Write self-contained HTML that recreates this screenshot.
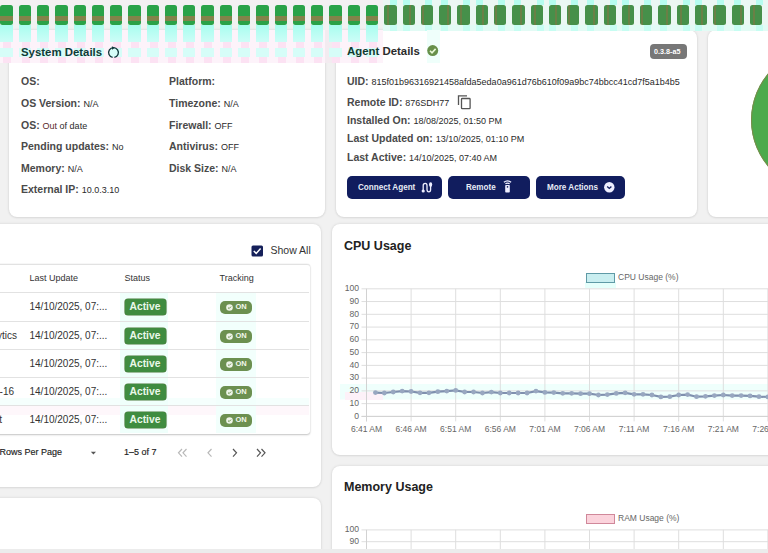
<!DOCTYPE html>
<html><head><meta charset="utf-8">
<style>
*{box-sizing:border-box;margin:0;padding:0}
html,body{width:768px;height:553px;overflow:hidden;background:#f1f1f1;font-family:"Liberation Sans",sans-serif;color:#333}
.abs{position:absolute}
.card{position:absolute;background:#fff;border-radius:8px;box-shadow:0 0 3px rgba(0,0,0,.13),0 1px 2px rgba(0,0,0,.05)}
.t{position:absolute;white-space:nowrap;line-height:1}
.title{font-weight:700;font-size:11.4px;color:#2b2b2b}
.lbl{font-weight:700;font-size:10.5px;color:#4a4a4a}
.val{font-weight:400;font-size:9px;color:#2a2a2a}
.btn{position:absolute;background:#111d5e;border-radius:5px;color:#e8ecf6;font-weight:700;font-size:9px}
.btn>span{transform:scaleX(0.9);transform-origin:0 0}
.act{position:absolute;background:#3f8c40;border-radius:3px;color:#eaf8ea;font-weight:700;font-size:10.3px;width:41px;height:16px;box-shadow:0 0 0 0.6px #4c7a3c}
.on{position:absolute;background:#6c9050;border-radius:5px;width:32px;height:13px}
.rowline{position:absolute;left:0;width:309px;height:1px;background:#e2e2e2}
.cell{position:absolute;white-space:nowrap;line-height:1;font-size:10px;color:#333}
</style></head><body>

<!-- top row cards -->
<div class="card" style="left:9px;top:30px;width:316px;height:187px"></div>
<div class="card" style="left:336px;top:30px;width:361px;height:187px"></div>
<div class="card" style="left:708px;top:30px;width:80px;height:187px;overflow:hidden">
  <div class="abs" style="left:43px;top:18px;width:144px;height:144px;border-radius:50%;background:#4caa4c;box-shadow:0 0 0 1px #7a8a4a inset"></div>
</div>

<!-- second row -->
<div class="card" style="left:-20px;top:224px;width:341px;height:263px"></div>
<div class="card" style="left:332px;top:224px;width:460px;height:231px"></div>
<div class="card" style="left:-20px;top:498px;width:341px;height:80px"></div>
<div class="card" style="left:332px;top:466px;width:460px;height:120px"></div>

<div class="abs" style="left:0;top:0;width:383px;height:5px;background:#f4f0f2"></div>
<div class="abs" style="left:0;top:30px;width:383px;height:33px;background:#fdf3fa"></div>
<div class="abs" style="left:325px;top:30px;width:11px;height:33px;background:#f3ebf0"></div>
<div class="abs" style="left:383px;top:0;width:385px;height:30px;background:#ebf7f3"></div>
<div class="abs" style="left:383px;top:25px;width:385px;height:6px;background:#e2fbf5"></div>
<div class="abs" style="left:0.40px;top:25px;width:12.3px;height:16.5px;background:linear-gradient(#a8fdef,#cdfdf7)"></div>
<div class="abs" style="left:3.40px;top:42px;width:8px;height:6px;background:#fce2f3"></div>
<div class="abs" style="left:0.40px;top:48px;width:12.3px;height:9px;background:#d6fdf8"></div>
<div class="abs" style="left:3.40px;top:57px;width:8px;height:6px;background:#fce2f3"></div>
<div class="abs" style="left:0.40px;top:5px;width:12.3px;height:19.8px;border-radius:2.5px;background:linear-gradient(#2aa248 0,#2aa248 11px,#82834a 11px,#82834a 16px,#2aa248 16px)"></div>
<div class="abs" style="left:18.68px;top:25px;width:12.3px;height:16.5px;background:linear-gradient(#a8fdef,#cdfdf7)"></div>
<div class="abs" style="left:21.68px;top:42px;width:8px;height:6px;background:#fce2f3"></div>
<div class="abs" style="left:18.68px;top:48px;width:12.3px;height:9px;background:#d6fdf8"></div>
<div class="abs" style="left:21.68px;top:57px;width:8px;height:6px;background:#fce2f3"></div>
<div class="abs" style="left:18.68px;top:5px;width:12.3px;height:19.8px;border-radius:2.5px;background:linear-gradient(#2aa248 0,#2aa248 11px,#82834a 11px,#82834a 16px,#2aa248 16px)"></div>
<div class="abs" style="left:36.96px;top:25px;width:12.3px;height:16.5px;background:linear-gradient(#a8fdef,#cdfdf7)"></div>
<div class="abs" style="left:39.96px;top:42px;width:8px;height:6px;background:#fce2f3"></div>
<div class="abs" style="left:36.96px;top:48px;width:12.3px;height:9px;background:#d6fdf8"></div>
<div class="abs" style="left:39.96px;top:57px;width:8px;height:6px;background:#fce2f3"></div>
<div class="abs" style="left:36.96px;top:5px;width:12.3px;height:19.8px;border-radius:2.5px;background:linear-gradient(#2aa248 0,#2aa248 11px,#82834a 11px,#82834a 16px,#2aa248 16px)"></div>
<div class="abs" style="left:55.24px;top:25px;width:12.3px;height:16.5px;background:linear-gradient(#a8fdef,#cdfdf7)"></div>
<div class="abs" style="left:58.24px;top:42px;width:8px;height:6px;background:#fce2f3"></div>
<div class="abs" style="left:55.24px;top:48px;width:12.3px;height:9px;background:#d6fdf8"></div>
<div class="abs" style="left:58.24px;top:57px;width:8px;height:6px;background:#fce2f3"></div>
<div class="abs" style="left:55.24px;top:5px;width:12.3px;height:19.8px;border-radius:2.5px;background:linear-gradient(#2aa248 0,#2aa248 11px,#82834a 11px,#82834a 16px,#2aa248 16px)"></div>
<div class="abs" style="left:73.52px;top:25px;width:12.3px;height:16.5px;background:linear-gradient(#a8fdef,#cdfdf7)"></div>
<div class="abs" style="left:76.52px;top:42px;width:8px;height:6px;background:#fce2f3"></div>
<div class="abs" style="left:73.52px;top:48px;width:12.3px;height:9px;background:#d6fdf8"></div>
<div class="abs" style="left:76.52px;top:57px;width:8px;height:6px;background:#fce2f3"></div>
<div class="abs" style="left:73.52px;top:5px;width:12.3px;height:19.8px;border-radius:2.5px;background:linear-gradient(#2aa248 0,#2aa248 11px,#82834a 11px,#82834a 16px,#2aa248 16px)"></div>
<div class="abs" style="left:91.80px;top:25px;width:12.3px;height:16.5px;background:linear-gradient(#a8fdef,#cdfdf7)"></div>
<div class="abs" style="left:94.80px;top:42px;width:8px;height:6px;background:#fce2f3"></div>
<div class="abs" style="left:91.80px;top:48px;width:12.3px;height:9px;background:#d6fdf8"></div>
<div class="abs" style="left:94.80px;top:57px;width:8px;height:6px;background:#fce2f3"></div>
<div class="abs" style="left:91.80px;top:5px;width:12.3px;height:19.8px;border-radius:2.5px;background:linear-gradient(#2aa248 0,#2aa248 11px,#82834a 11px,#82834a 16px,#2aa248 16px)"></div>
<div class="abs" style="left:110.08px;top:25px;width:12.3px;height:16.5px;background:linear-gradient(#a8fdef,#cdfdf7)"></div>
<div class="abs" style="left:113.08px;top:42px;width:8px;height:6px;background:#fce2f3"></div>
<div class="abs" style="left:110.08px;top:48px;width:12.3px;height:9px;background:#d6fdf8"></div>
<div class="abs" style="left:113.08px;top:57px;width:8px;height:6px;background:#fce2f3"></div>
<div class="abs" style="left:110.08px;top:5px;width:12.3px;height:19.8px;border-radius:2.5px;background:linear-gradient(#2aa248 0,#2aa248 11px,#82834a 11px,#82834a 16px,#2aa248 16px)"></div>
<div class="abs" style="left:128.36px;top:25px;width:12.3px;height:16.5px;background:linear-gradient(#a8fdef,#cdfdf7)"></div>
<div class="abs" style="left:131.36px;top:42px;width:8px;height:6px;background:#fce2f3"></div>
<div class="abs" style="left:128.36px;top:48px;width:12.3px;height:9px;background:#d6fdf8"></div>
<div class="abs" style="left:131.36px;top:57px;width:8px;height:6px;background:#fce2f3"></div>
<div class="abs" style="left:128.36px;top:5px;width:12.3px;height:19.8px;border-radius:2.5px;background:linear-gradient(#2aa248 0,#2aa248 11px,#82834a 11px,#82834a 16px,#2aa248 16px)"></div>
<div class="abs" style="left:146.64px;top:25px;width:12.3px;height:16.5px;background:linear-gradient(#a8fdef,#cdfdf7)"></div>
<div class="abs" style="left:149.64px;top:42px;width:8px;height:6px;background:#fce2f3"></div>
<div class="abs" style="left:146.64px;top:48px;width:12.3px;height:9px;background:#d6fdf8"></div>
<div class="abs" style="left:149.64px;top:57px;width:8px;height:6px;background:#fce2f3"></div>
<div class="abs" style="left:146.64px;top:5px;width:12.3px;height:19.8px;border-radius:2.5px;background:linear-gradient(#2aa248 0,#2aa248 11px,#82834a 11px,#82834a 16px,#2aa248 16px)"></div>
<div class="abs" style="left:164.92px;top:25px;width:12.3px;height:16.5px;background:linear-gradient(#a8fdef,#cdfdf7)"></div>
<div class="abs" style="left:167.92px;top:42px;width:8px;height:6px;background:#fce2f3"></div>
<div class="abs" style="left:164.92px;top:48px;width:12.3px;height:9px;background:#d6fdf8"></div>
<div class="abs" style="left:167.92px;top:57px;width:8px;height:6px;background:#fce2f3"></div>
<div class="abs" style="left:164.92px;top:5px;width:12.3px;height:19.8px;border-radius:2.5px;background:linear-gradient(#2aa248 0,#2aa248 11px,#82834a 11px,#82834a 16px,#2aa248 16px)"></div>
<div class="abs" style="left:183.20px;top:25px;width:12.3px;height:16.5px;background:linear-gradient(#a8fdef,#cdfdf7)"></div>
<div class="abs" style="left:186.20px;top:42px;width:8px;height:6px;background:#fce2f3"></div>
<div class="abs" style="left:183.20px;top:48px;width:12.3px;height:9px;background:#d6fdf8"></div>
<div class="abs" style="left:186.20px;top:57px;width:8px;height:6px;background:#fce2f3"></div>
<div class="abs" style="left:183.20px;top:5px;width:12.3px;height:19.8px;border-radius:2.5px;background:linear-gradient(#2aa248 0,#2aa248 11px,#82834a 11px,#82834a 16px,#2aa248 16px)"></div>
<div class="abs" style="left:201.48px;top:25px;width:12.3px;height:16.5px;background:linear-gradient(#a8fdef,#cdfdf7)"></div>
<div class="abs" style="left:204.48px;top:42px;width:8px;height:6px;background:#fce2f3"></div>
<div class="abs" style="left:201.48px;top:48px;width:12.3px;height:9px;background:#d6fdf8"></div>
<div class="abs" style="left:204.48px;top:57px;width:8px;height:6px;background:#fce2f3"></div>
<div class="abs" style="left:201.48px;top:5px;width:12.3px;height:19.8px;border-radius:2.5px;background:linear-gradient(#2aa248 0,#2aa248 11px,#82834a 11px,#82834a 16px,#2aa248 16px)"></div>
<div class="abs" style="left:219.76px;top:25px;width:12.3px;height:16.5px;background:linear-gradient(#a8fdef,#cdfdf7)"></div>
<div class="abs" style="left:222.76px;top:42px;width:8px;height:6px;background:#fce2f3"></div>
<div class="abs" style="left:219.76px;top:48px;width:12.3px;height:9px;background:#d6fdf8"></div>
<div class="abs" style="left:222.76px;top:57px;width:8px;height:6px;background:#fce2f3"></div>
<div class="abs" style="left:219.76px;top:5px;width:12.3px;height:19.8px;border-radius:2.5px;background:linear-gradient(#2aa248 0,#2aa248 11px,#82834a 11px,#82834a 16px,#2aa248 16px)"></div>
<div class="abs" style="left:238.04px;top:25px;width:12.3px;height:16.5px;background:linear-gradient(#a8fdef,#cdfdf7)"></div>
<div class="abs" style="left:241.04px;top:42px;width:8px;height:6px;background:#fce2f3"></div>
<div class="abs" style="left:238.04px;top:48px;width:12.3px;height:9px;background:#d6fdf8"></div>
<div class="abs" style="left:241.04px;top:57px;width:8px;height:6px;background:#fce2f3"></div>
<div class="abs" style="left:238.04px;top:5px;width:12.3px;height:19.8px;border-radius:2.5px;background:linear-gradient(#2aa248 0,#2aa248 11px,#82834a 11px,#82834a 16px,#2aa248 16px)"></div>
<div class="abs" style="left:256.32px;top:25px;width:12.3px;height:16.5px;background:linear-gradient(#a8fdef,#cdfdf7)"></div>
<div class="abs" style="left:259.32px;top:42px;width:8px;height:6px;background:#fce2f3"></div>
<div class="abs" style="left:256.32px;top:48px;width:12.3px;height:9px;background:#d6fdf8"></div>
<div class="abs" style="left:259.32px;top:57px;width:8px;height:6px;background:#fce2f3"></div>
<div class="abs" style="left:256.32px;top:5px;width:12.3px;height:19.8px;border-radius:2.5px;background:linear-gradient(#2aa248 0,#2aa248 11px,#82834a 11px,#82834a 16px,#2aa248 16px)"></div>
<div class="abs" style="left:274.60px;top:25px;width:12.3px;height:16.5px;background:linear-gradient(#a8fdef,#cdfdf7)"></div>
<div class="abs" style="left:277.60px;top:42px;width:8px;height:6px;background:#fce2f3"></div>
<div class="abs" style="left:274.60px;top:48px;width:12.3px;height:9px;background:#d6fdf8"></div>
<div class="abs" style="left:277.60px;top:57px;width:8px;height:6px;background:#fce2f3"></div>
<div class="abs" style="left:274.60px;top:5px;width:12.3px;height:19.8px;border-radius:2.5px;background:linear-gradient(#2aa248 0,#2aa248 11px,#82834a 11px,#82834a 16px,#2aa248 16px)"></div>
<div class="abs" style="left:292.88px;top:25px;width:12.3px;height:16.5px;background:linear-gradient(#a8fdef,#cdfdf7)"></div>
<div class="abs" style="left:295.88px;top:42px;width:8px;height:6px;background:#fce2f3"></div>
<div class="abs" style="left:292.88px;top:48px;width:12.3px;height:9px;background:#d6fdf8"></div>
<div class="abs" style="left:295.88px;top:57px;width:8px;height:6px;background:#fce2f3"></div>
<div class="abs" style="left:292.88px;top:5px;width:12.3px;height:19.8px;border-radius:2.5px;background:linear-gradient(#2aa248 0,#2aa248 11px,#82834a 11px,#82834a 16px,#2aa248 16px)"></div>
<div class="abs" style="left:311.16px;top:25px;width:12.3px;height:16.5px;background:linear-gradient(#a8fdef,#cdfdf7)"></div>
<div class="abs" style="left:314.16px;top:42px;width:8px;height:6px;background:#fce2f3"></div>
<div class="abs" style="left:311.16px;top:48px;width:12.3px;height:9px;background:#d6fdf8"></div>
<div class="abs" style="left:314.16px;top:57px;width:8px;height:6px;background:#fce2f3"></div>
<div class="abs" style="left:311.16px;top:5px;width:12.3px;height:19.8px;border-radius:2.5px;background:linear-gradient(#2aa248 0,#2aa248 11px,#82834a 11px,#82834a 16px,#2aa248 16px)"></div>
<div class="abs" style="left:329.44px;top:25px;width:12.3px;height:16.5px;background:linear-gradient(#a8fdef,#cdfdf7)"></div>
<div class="abs" style="left:332.44px;top:42px;width:8px;height:6px;background:#fce2f3"></div>
<div class="abs" style="left:329.44px;top:48px;width:12.3px;height:9px;background:#d6fdf8"></div>
<div class="abs" style="left:332.44px;top:57px;width:8px;height:6px;background:#fce2f3"></div>
<div class="abs" style="left:329.44px;top:5px;width:12.3px;height:19.8px;border-radius:2.5px;background:linear-gradient(#2aa248 0,#2aa248 11px,#82834a 11px,#82834a 16px,#2aa248 16px)"></div>
<div class="abs" style="left:347.72px;top:25px;width:12.3px;height:16.5px;background:linear-gradient(#a8fdef,#cdfdf7)"></div>
<div class="abs" style="left:350.72px;top:42px;width:8px;height:6px;background:#fce2f3"></div>
<div class="abs" style="left:347.72px;top:48px;width:12.3px;height:9px;background:#d6fdf8"></div>
<div class="abs" style="left:350.72px;top:57px;width:8px;height:6px;background:#fce2f3"></div>
<div class="abs" style="left:347.72px;top:5px;width:12.3px;height:19.8px;border-radius:2.5px;background:linear-gradient(#2aa248 0,#2aa248 11px,#82834a 11px,#82834a 16px,#2aa248 16px)"></div>
<div class="abs" style="left:366.00px;top:25px;width:12.3px;height:16.5px;background:linear-gradient(#a8fdef,#cdfdf7)"></div>
<div class="abs" style="left:369.00px;top:42px;width:8px;height:6px;background:#fce2f3"></div>
<div class="abs" style="left:366.00px;top:48px;width:12.3px;height:9px;background:#d6fdf8"></div>
<div class="abs" style="left:369.00px;top:57px;width:8px;height:6px;background:#fce2f3"></div>
<div class="abs" style="left:366.00px;top:5px;width:12.3px;height:19.8px;border-radius:2.5px;background:linear-gradient(#2aa248 0,#2aa248 11px,#82834a 11px,#82834a 16px,#2aa248 16px)"></div>
<div class="abs" style="left:390.28px;top:0;width:7px;height:5px;background:#b6fcef"></div>
<div class="abs" style="left:390.28px;top:25px;width:7px;height:6px;background:#c6fdf2"></div>
<div class="abs" style="left:384.28px;top:5px;width:12.3px;height:19.8px;border-radius:2.5px;background:linear-gradient(90deg,#46904a 0,#46904a 3px,#6a8046 3px,#6a8046 5px,#46904a 5px)"></div>
<div class="abs" style="left:402.56px;top:0;width:7px;height:5px;background:#b6fcef"></div>
<div class="abs" style="left:402.56px;top:25px;width:7px;height:6px;background:#c6fdf2"></div>
<div class="abs" style="left:402.56px;top:5px;width:12.3px;height:19.8px;border-radius:2.5px;background:linear-gradient(90deg,#46904a 0,#46904a 6px,#6a8046 6px,#6a8046 8px,#46904a 8px)"></div>
<div class="abs" style="left:424.84px;top:0;width:7px;height:5px;background:#b6fcef"></div>
<div class="abs" style="left:424.84px;top:25px;width:7px;height:6px;background:#c6fdf2"></div>
<div class="abs" style="left:420.84px;top:5px;width:12.3px;height:19.8px;border-radius:2.5px;background:linear-gradient(90deg,#46904a 0,#46904a 1px,#6a8046 1px,#6a8046 3px,#46904a 3px)"></div>
<div class="abs" style="left:441.12px;top:0;width:7px;height:5px;background:#b6fcef"></div>
<div class="abs" style="left:441.12px;top:25px;width:7px;height:6px;background:#c6fdf2"></div>
<div class="abs" style="left:439.12px;top:5px;width:12.3px;height:19.8px;border-radius:2.5px;background:linear-gradient(90deg,#46904a 0,#46904a 8px,#6a8046 8px,#6a8046 10px,#46904a 10px)"></div>
<div class="abs" style="left:463.40px;top:0;width:7px;height:5px;background:#b6fcef"></div>
<div class="abs" style="left:463.40px;top:25px;width:7px;height:6px;background:#c6fdf2"></div>
<div class="abs" style="left:457.40px;top:5px;width:12.3px;height:19.8px;border-radius:2.5px;background:linear-gradient(90deg,#46904a 0,#46904a 3px,#6a8046 3px,#6a8046 5px,#46904a 5px)"></div>
<div class="abs" style="left:475.68px;top:0;width:7px;height:5px;background:#b6fcef"></div>
<div class="abs" style="left:475.68px;top:25px;width:7px;height:6px;background:#c6fdf2"></div>
<div class="abs" style="left:475.68px;top:5px;width:12.3px;height:19.8px;border-radius:2.5px;background:linear-gradient(90deg,#46904a 0,#46904a 6px,#6a8046 6px,#6a8046 8px,#46904a 8px)"></div>
<div class="abs" style="left:497.96px;top:0;width:7px;height:5px;background:#b6fcef"></div>
<div class="abs" style="left:497.96px;top:25px;width:7px;height:6px;background:#c6fdf2"></div>
<div class="abs" style="left:493.96px;top:5px;width:12.3px;height:19.8px;border-radius:2.5px;background:linear-gradient(90deg,#46904a 0,#46904a 1px,#6a8046 1px,#6a8046 3px,#46904a 3px)"></div>
<div class="abs" style="left:514.24px;top:0;width:7px;height:5px;background:#b6fcef"></div>
<div class="abs" style="left:514.24px;top:25px;width:7px;height:6px;background:#c6fdf2"></div>
<div class="abs" style="left:512.24px;top:5px;width:12.3px;height:19.8px;border-radius:2.5px;background:linear-gradient(90deg,#46904a 0,#46904a 8px,#6a8046 8px,#6a8046 10px,#46904a 10px)"></div>
<div class="abs" style="left:536.52px;top:0;width:7px;height:5px;background:#b6fcef"></div>
<div class="abs" style="left:536.52px;top:25px;width:7px;height:6px;background:#c6fdf2"></div>
<div class="abs" style="left:530.52px;top:5px;width:12.3px;height:19.8px;border-radius:2.5px;background:linear-gradient(90deg,#46904a 0,#46904a 3px,#6a8046 3px,#6a8046 5px,#46904a 5px)"></div>
<div class="abs" style="left:548.80px;top:0;width:7px;height:5px;background:#b6fcef"></div>
<div class="abs" style="left:548.80px;top:25px;width:7px;height:6px;background:#c6fdf2"></div>
<div class="abs" style="left:548.80px;top:5px;width:12.3px;height:19.8px;border-radius:2.5px;background:linear-gradient(90deg,#46904a 0,#46904a 6px,#6a8046 6px,#6a8046 8px,#46904a 8px)"></div>
<div class="abs" style="left:571.08px;top:0;width:7px;height:5px;background:#b6fcef"></div>
<div class="abs" style="left:571.08px;top:25px;width:7px;height:6px;background:#c6fdf2"></div>
<div class="abs" style="left:567.08px;top:5px;width:12.3px;height:19.8px;border-radius:2.5px;background:linear-gradient(90deg,#46904a 0,#46904a 1px,#6a8046 1px,#6a8046 3px,#46904a 3px)"></div>
<div class="abs" style="left:587.36px;top:0;width:7px;height:5px;background:#b6fcef"></div>
<div class="abs" style="left:587.36px;top:25px;width:7px;height:6px;background:#c6fdf2"></div>
<div class="abs" style="left:585.36px;top:5px;width:12.3px;height:19.8px;border-radius:2.5px;background:linear-gradient(90deg,#46904a 0,#46904a 8px,#6a8046 8px,#6a8046 10px,#46904a 10px)"></div>
<div class="abs" style="left:609.64px;top:0;width:7px;height:5px;background:#b6fcef"></div>
<div class="abs" style="left:609.64px;top:25px;width:7px;height:6px;background:#c6fdf2"></div>
<div class="abs" style="left:603.64px;top:5px;width:12.3px;height:19.8px;border-radius:2.5px;background:linear-gradient(90deg,#46904a 0,#46904a 3px,#6a8046 3px,#6a8046 5px,#46904a 5px)"></div>
<div class="abs" style="left:621.92px;top:0;width:7px;height:5px;background:#b6fcef"></div>
<div class="abs" style="left:621.92px;top:25px;width:7px;height:6px;background:#c6fdf2"></div>
<div class="abs" style="left:621.92px;top:5px;width:12.3px;height:19.8px;border-radius:2.5px;background:linear-gradient(90deg,#46904a 0,#46904a 6px,#6a8046 6px,#6a8046 8px,#46904a 8px)"></div>
<div class="abs" style="left:644.20px;top:0;width:7px;height:5px;background:#b6fcef"></div>
<div class="abs" style="left:644.20px;top:25px;width:7px;height:6px;background:#c6fdf2"></div>
<div class="abs" style="left:640.20px;top:5px;width:12.3px;height:19.8px;border-radius:2.5px;background:linear-gradient(90deg,#46904a 0,#46904a 1px,#6a8046 1px,#6a8046 3px,#46904a 3px)"></div>
<div class="abs" style="left:660.48px;top:0;width:7px;height:5px;background:#b6fcef"></div>
<div class="abs" style="left:660.48px;top:25px;width:7px;height:6px;background:#c6fdf2"></div>
<div class="abs" style="left:658.48px;top:5px;width:12.3px;height:19.8px;border-radius:2.5px;background:linear-gradient(90deg,#46904a 0,#46904a 8px,#6a8046 8px,#6a8046 10px,#46904a 10px)"></div>
<div class="abs" style="left:682.76px;top:0;width:7px;height:5px;background:#b6fcef"></div>
<div class="abs" style="left:682.76px;top:25px;width:7px;height:6px;background:#c6fdf2"></div>
<div class="abs" style="left:676.76px;top:5px;width:12.3px;height:19.8px;border-radius:2.5px;background:linear-gradient(90deg,#46904a 0,#46904a 3px,#6a8046 3px,#6a8046 5px,#46904a 5px)"></div>
<div class="abs" style="left:695.04px;top:0;width:7px;height:5px;background:#b6fcef"></div>
<div class="abs" style="left:695.04px;top:25px;width:7px;height:6px;background:#c6fdf2"></div>
<div class="abs" style="left:695.04px;top:5px;width:12.3px;height:19.8px;border-radius:2.5px;background:linear-gradient(90deg,#46904a 0,#46904a 6px,#6a8046 6px,#6a8046 8px,#46904a 8px)"></div>
<div class="abs" style="left:717.32px;top:0;width:7px;height:5px;background:#b6fcef"></div>
<div class="abs" style="left:717.32px;top:25px;width:7px;height:6px;background:#c6fdf2"></div>
<div class="abs" style="left:713.32px;top:5px;width:12.3px;height:19.8px;border-radius:2.5px;background:linear-gradient(90deg,#46904a 0,#46904a 1px,#6a8046 1px,#6a8046 3px,#46904a 3px)"></div>
<div class="abs" style="left:733.60px;top:0;width:7px;height:5px;background:#b6fcef"></div>
<div class="abs" style="left:733.60px;top:25px;width:7px;height:6px;background:#c6fdf2"></div>
<div class="abs" style="left:731.60px;top:5px;width:12.3px;height:19.8px;border-radius:2.5px;background:linear-gradient(90deg,#46904a 0,#46904a 8px,#6a8046 8px,#6a8046 10px,#46904a 10px)"></div>
<div class="abs" style="left:755.88px;top:0;width:7px;height:5px;background:#b6fcef"></div>
<div class="abs" style="left:755.88px;top:25px;width:7px;height:6px;background:#c6fdf2"></div>
<div class="abs" style="left:749.88px;top:5px;width:12.3px;height:19.8px;border-radius:2.5px;background:linear-gradient(90deg,#46904a 0,#46904a 3px,#6a8046 3px,#6a8046 5px,#46904a 5px)"></div>
<!-- System details -->
<div class="t title" style="left:21px;top:46.8px;color:#0f3a36">System Details</div>
<svg class="abs" style="left:106.8px;top:46.2px" width="13" height="13" viewBox="0 0 13 13"><path d="M5.65 11.33 A4.9 4.9 0 1 1 7.35 11.33" fill="none" stroke="#10363a" stroke-width="1.35"/><path d="M4.9 0.2 L7.8 1.7 L5.1 3.7 Z" fill="#10363a"/></svg>

<div class="t lbl" style="left:21px;top:76px">OS:</div>
<div class="t lbl" style="left:21px;top:98px">OS Version: <span class="val">N/A</span></div>
<div class="t lbl" style="left:21px;top:120px">OS: <span class="val" style="color:#5a2a2a">Out</span><span class="val"> of date</span></div>
<div class="t lbl" style="left:21px;top:141px">Pending updates: <span class="val">No</span></div>
<div class="t lbl" style="left:21px;top:162.5px">Memory: <span class="val">N/A</span></div>
<div class="t lbl" style="left:21px;top:184.3px">External IP: <span class="val">10.0.3.10</span></div>

<div class="t lbl" style="left:169px;top:76px">Platform:</div>
<div class="t lbl" style="left:169px;top:98px">Timezone: <span class="val">N/A</span></div>
<div class="t lbl" style="left:169px;top:120px">Firewall: <span class="val">OFF</span></div>
<div class="t lbl" style="left:169px;top:141px">Antivirus: <span class="val">OFF</span></div>
<div class="t lbl" style="left:169px;top:162.5px">Disk Size: <span class="val">N/A</span></div>

<!-- Agent details -->
<div class="abs" style="left:427px;top:30px;width:13px;height:33px;background:#effffb"></div>
<div class="t title" style="left:347px;top:46px"><span style="color:#0f3a30">Agent</span> Details</div>
<svg class="abs" style="left:427.4px;top:45.4px" width="12" height="12" viewBox="0 0 12 12"><circle cx="5.7" cy="5.6" r="5.5" fill="#66904a"/><path d="M3 5.8 L5 7.8 L8.6 3.9" fill="none" stroke="#e8f8d8" stroke-width="1.6"/></svg>
<div class="abs" style="left:650px;top:44px;width:37px;height:15px;border-radius:4px;background:#777"></div>
<div class="t" style="left:654px;top:47.8px;font-size:7.2px;font-weight:700;color:#fff">0.3.8-a5</div>

<div class="t lbl" style="left:347px;top:76px">UID: <span class="val">815f01b96316921458afda5eda0a961d76b610f09a9bc74bbcc41cd7f5a1b4b5</span></div>
<div class="t lbl" style="left:347px;top:97px">Remote ID: <span class="val">876SDH77</span></div>
<svg class="abs" style="left:457px;top:94px" width="15" height="16" viewBox="0 0 15 16"><path d="M1.5 11 V1.8 H10" fill="none" stroke="#555" stroke-width="1.3"/><rect x="4.5" y="4.5" width="8.6" height="10.2" fill="none" stroke="#555" stroke-width="1.3" rx="0.8"/></svg>
<div class="t lbl" style="left:347px;top:115px">Installed On: <span class="val">18/08/2025, 01:50 PM</span></div>
<div class="t lbl" style="left:347px;top:133.3px">Last Updated on: <span class="val">13/10/2025, 01:10 PM</span></div>
<div class="t lbl" style="left:347px;top:152px">Last Active: <span class="val">14/10/2025, 07:40 AM</span></div>

<div class="btn" style="left:347px;top:176px;width:95px;height:23px"><span class="t" style="left:11px;top:7px">Connect Agent</span>
  <svg class="abs" style="left:74px;top:5px" width="12" height="13" viewBox="0 0 12 13"><path d="M2.2 10 V4.5 Q2.2 2.3 4.2 2.3 Q6 2.3 6 4.5 V8.6 Q6 10.8 7.9 10.8 Q9.6 10.8 9.6 8.6 V3.5" fill="none" stroke="#eef" stroke-width="1.3"/><circle cx="2.2" cy="10" r="1.6" fill="#eef"/><ellipse cx="9.6" cy="3.6" rx="1.6" ry="2.3" fill="#eef"/></svg>
</div>
<div class="btn" style="left:448px;top:176px;width:82px;height:23px"><span class="t" style="left:17.5px;top:7px">Remote</span>
  <svg class="abs" style="left:55px;top:3.2px" width="9" height="14" viewBox="0 0 9 14"><rect x="2.2" y="6" width="4.6" height="7.6" rx="0.8" fill="#eef"/><circle cx="4.5" cy="7.9" r="0.8" fill="#111d5e"/><path d="M0.9 3.3 Q4.5 0.3 8.1 3.3" fill="none" stroke="#eef" stroke-width="1.2"/><path d="M2.4 4.9 Q4.5 3.2 6.6 4.9" fill="none" stroke="#eef" stroke-width="1.2"/></svg>
</div>
<div class="btn" style="left:536px;top:176px;width:89px;height:23px"><span class="t" style="left:11px;top:7px">More Actions</span>
  <svg class="abs" style="left:68px;top:6px" width="11" height="11" viewBox="0 0 11 11"><circle cx="5.3" cy="5.3" r="5.2" fill="#eef"/><path d="M3.2 4.4 L5.3 6.4 L7.4 4.4" fill="none" stroke="#111d5e" stroke-width="1.4"/></svg>
</div>

<!-- Table card -->
<svg class="abs" style="left:250.5px;top:244.5px" width="13" height="13" viewBox="0 0 13 13"><rect x="0.5" y="0.5" width="11.5" height="11" rx="1.5" fill="#15205a"/><path d="M2.8 6 L5.2 8.4 L9.6 3.6" fill="none" stroke="#fff" stroke-width="1.5"/></svg>
<div class="t" style="left:270.5px;top:245.2px;font-size:10.5px;color:#333">Show All</div>

<div class="abs" style="left:-10px;top:264px;width:320px;height:170px;border-radius:3px;box-shadow:0 1px 2px rgba(0,0,0,.22),0 0 1px rgba(0,0,0,.2);border-top:1px solid #e2e2e2"></div>
<div class="abs" style="left:0;top:398px;width:309px;height:7px;background:#f5fffd"></div>
<div class="abs" style="left:0;top:406px;width:309px;height:9px;background:#fef7fb"></div>
<div class="abs" style="left:120px;top:292px;width:48px;height:141px;background:#effffb"></div>
<div class="abs" style="left:216px;top:292px;width:40px;height:141px;background:#f2fffc"></div>
<div class="t" style="left:29.5px;top:274px;font-size:9px;color:#333">Last Update</div>
<div class="t" style="left:124.5px;top:274px;font-size:9px;color:#333">Status</div>
<div class="t" style="left:219.5px;top:274px;font-size:9px;color:#333">Tracking</div>
<div class="rowline" style="top:292px"></div>
<div class="rowline" style="top:321px"></div>
<div class="rowline" style="top:349px"></div>
<div class="rowline" style="top:377px"></div>
<div class="rowline" style="top:405px"></div>

<div class="cell" style="left:29.5px;top:301.8px">14/10/2025, 07:...</div>
<div class="act" style="left:124.5px;top:298.5px"><span class="t" style="left:5px;top:3.6px">Active</span></div>
<div class="on" style="left:220px;top:300.5px"><svg class="abs" style="left:6px;top:3px" width="7" height="7" viewBox="0 0 7 7"><circle cx="3.5" cy="3.5" r="3.3" fill="#eef4e8"/><path d="M2 3.6 L3.1 4.6 L5 2.6" fill="none" stroke="#6c9050" stroke-width="1"/></svg><span class="t" style="left:15.5px;top:2.8px;font-size:7.5px;font-weight:700;color:#f2f8ec">ON</span></div>
<div class="cell" style="right:751px;top:330.8px">ytics</div>
<div class="cell" style="left:29.5px;top:330.8px">14/10/2025, 07:...</div>
<div class="act" style="left:124.5px;top:327.5px"><span class="t" style="left:5px;top:3.6px">Active</span></div>
<div class="on" style="left:220px;top:329.5px"><svg class="abs" style="left:6px;top:3px" width="7" height="7" viewBox="0 0 7 7"><circle cx="3.5" cy="3.5" r="3.3" fill="#eef4e8"/><path d="M2 3.6 L3.1 4.6 L5 2.6" fill="none" stroke="#6c9050" stroke-width="1"/></svg><span class="t" style="left:15.5px;top:2.8px;font-size:7.5px;font-weight:700;color:#f2f8ec">ON</span></div>
<div class="cell" style="left:29.5px;top:358.8px">14/10/2025, 07:...</div>
<div class="act" style="left:124.5px;top:355.5px"><span class="t" style="left:5px;top:3.6px">Active</span></div>
<div class="on" style="left:220px;top:357.5px"><svg class="abs" style="left:6px;top:3px" width="7" height="7" viewBox="0 0 7 7"><circle cx="3.5" cy="3.5" r="3.3" fill="#eef4e8"/><path d="M2 3.6 L3.1 4.6 L5 2.6" fill="none" stroke="#6c9050" stroke-width="1"/></svg><span class="t" style="left:15.5px;top:2.8px;font-size:7.5px;font-weight:700;color:#f2f8ec">ON</span></div>
<div class="cell" style="right:754px;top:386.8px">-16</div>
<div class="cell" style="left:29.5px;top:386.8px">14/10/2025, 07:...</div>
<div class="act" style="left:124.5px;top:383.5px"><span class="t" style="left:5px;top:3.6px">Active</span></div>
<div class="on" style="left:220px;top:385.5px"><svg class="abs" style="left:6px;top:3px" width="7" height="7" viewBox="0 0 7 7"><circle cx="3.5" cy="3.5" r="3.3" fill="#eef4e8"/><path d="M2 3.6 L3.1 4.6 L5 2.6" fill="none" stroke="#6c9050" stroke-width="1"/></svg><span class="t" style="left:15.5px;top:2.8px;font-size:7.5px;font-weight:700;color:#f2f8ec">ON</span></div>
<div class="cell" style="right:766px;top:414.8px">t</div>
<div class="cell" style="left:29.5px;top:414.8px">14/10/2025, 07:...</div>
<div class="act" style="left:124.5px;top:411.5px"><span class="t" style="left:5px;top:3.6px">Active</span></div>
<div class="on" style="left:220px;top:413.5px"><svg class="abs" style="left:6px;top:3px" width="7" height="7" viewBox="0 0 7 7"><circle cx="3.5" cy="3.5" r="3.3" fill="#eef4e8"/><path d="M2 3.6 L3.1 4.6 L5 2.6" fill="none" stroke="#6c9050" stroke-width="1"/></svg><span class="t" style="left:15.5px;top:2.8px;font-size:7.5px;font-weight:700;color:#f2f8ec">ON</span></div>

<div class="t" style="left:-0.5px;top:448px;font-size:9px;color:#222;-webkit-text-stroke:0.15px #222">Rows Per Page</div>
<svg class="abs" style="left:90px;top:451px" width="7" height="5" viewBox="0 0 7 5"><path d="M0.8 0.8 L3.4 3.6 L6 0.8 Z" fill="#555"/></svg>
<div class="t" style="left:124px;top:448px;font-size:9px;color:#222;-webkit-text-stroke:0.15px #222">1–5 of 7</div>
<svg class="abs" style="left:176px;top:447px" width="95" height="12" viewBox="0 0 95 12">
 <g fill="none" stroke-width="1.2">
 <path d="M6 2 L2.5 5.8 L6 9.6 M10.5 2 L7 5.8 L10.5 9.6" stroke="#b8b8b8"/>
 <path d="M35.5 2 L32 5.8 L35.5 9.6" stroke="#b8b8b8"/>
 <path d="M57 2 L60.5 5.8 L57 9.6" stroke="#555"/>
 <path d="M81 2 L84.5 5.8 L81 9.6 M85.5 2 L89 5.8 L85.5 9.6" stroke="#555"/>
 </g></svg>

<!-- CPU chart -->
<div class="t" style="left:344px;top:239.8px;font-weight:700;font-size:12.5px;color:#222">CPU Usage</div>
<div class="abs" style="left:584.5px;top:282px;width:31px;height:6px;background:#e6fffb"></div>
<div class="abs" style="left:585.5px;top:273px;width:29px;height:10px;border:1.8px solid #5f9aa6;background:#c9eef0"></div>
<div class="t" style="left:618px;top:272.5px;font-size:8.5px;color:#666">CPU Usage (%)</div>
<svg class="abs" style="left:0;top:0;font-family:'Liberation Sans'" width="768" height="553">
<rect x="340" y="384" width="428" height="15.5" fill="#effffc"/>
<rect x="345" y="392" width="38" height="8" fill="#fdf1f8"/>
<line x1="361.5" x2="768" y1="416.40" y2="416.40" stroke="#dedede" stroke-width="1"/>
<text x="359" y="418.70" text-anchor="end" font-size="8.6" fill="#666">0</text>
<line x1="361.5" x2="768" y1="403.64" y2="403.64" stroke="#dedede" stroke-width="1"/>
<text x="359" y="405.94" text-anchor="end" font-size="8.6" fill="#666">10</text>
<line x1="361.5" x2="768" y1="390.88" y2="390.88" stroke="#dedede" stroke-width="1"/>
<text x="359" y="393.18" text-anchor="end" font-size="8.6" fill="#666">20</text>
<line x1="361.5" x2="768" y1="378.12" y2="378.12" stroke="#dedede" stroke-width="1"/>
<text x="359" y="380.42" text-anchor="end" font-size="8.6" fill="#666">30</text>
<line x1="361.5" x2="768" y1="365.36" y2="365.36" stroke="#dedede" stroke-width="1"/>
<text x="359" y="367.66" text-anchor="end" font-size="8.6" fill="#666">40</text>
<line x1="361.5" x2="768" y1="352.60" y2="352.60" stroke="#dedede" stroke-width="1"/>
<text x="359" y="354.90" text-anchor="end" font-size="8.6" fill="#666">50</text>
<line x1="361.5" x2="768" y1="339.84" y2="339.84" stroke="#dedede" stroke-width="1"/>
<text x="359" y="342.14" text-anchor="end" font-size="8.6" fill="#666">60</text>
<line x1="361.5" x2="768" y1="327.08" y2="327.08" stroke="#dedede" stroke-width="1"/>
<text x="359" y="329.38" text-anchor="end" font-size="8.6" fill="#666">70</text>
<line x1="361.5" x2="768" y1="314.32" y2="314.32" stroke="#dedede" stroke-width="1"/>
<text x="359" y="316.62" text-anchor="end" font-size="8.6" fill="#666">80</text>
<line x1="361.5" x2="768" y1="301.56" y2="301.56" stroke="#dedede" stroke-width="1"/>
<text x="359" y="303.86" text-anchor="end" font-size="8.6" fill="#666">90</text>
<line x1="361.5" x2="768" y1="288.80" y2="288.80" stroke="#dedede" stroke-width="1"/>
<text x="359" y="291.10" text-anchor="end" font-size="8.6" fill="#666">100</text>
<line x1="366.50" x2="366.50" y1="288.80" y2="421.40" stroke="#dedede" stroke-width="1"/>
<text x="366.50" y="431.8" text-anchor="middle" font-size="8.5" fill="#666">6:41 AM</text>
<line x1="411.10" x2="411.10" y1="288.80" y2="421.40" stroke="#dedede" stroke-width="1"/>
<text x="411.10" y="431.8" text-anchor="middle" font-size="8.5" fill="#666">6:46 AM</text>
<line x1="455.70" x2="455.70" y1="288.80" y2="421.40" stroke="#dedede" stroke-width="1"/>
<text x="455.70" y="431.8" text-anchor="middle" font-size="8.5" fill="#666">6:51 AM</text>
<line x1="500.30" x2="500.30" y1="288.80" y2="421.40" stroke="#dedede" stroke-width="1"/>
<text x="500.30" y="431.8" text-anchor="middle" font-size="8.5" fill="#666">6:56 AM</text>
<line x1="544.90" x2="544.90" y1="288.80" y2="421.40" stroke="#dedede" stroke-width="1"/>
<text x="544.90" y="431.8" text-anchor="middle" font-size="8.5" fill="#666">7:01 AM</text>
<line x1="589.50" x2="589.50" y1="288.80" y2="421.40" stroke="#dedede" stroke-width="1"/>
<text x="589.50" y="431.8" text-anchor="middle" font-size="8.5" fill="#666">7:06 AM</text>
<line x1="634.10" x2="634.10" y1="288.80" y2="421.40" stroke="#dedede" stroke-width="1"/>
<text x="634.10" y="431.8" text-anchor="middle" font-size="8.5" fill="#666">7:11 AM</text>
<line x1="678.70" x2="678.70" y1="288.80" y2="421.40" stroke="#dedede" stroke-width="1"/>
<text x="678.70" y="431.8" text-anchor="middle" font-size="8.5" fill="#666">7:16 AM</text>
<line x1="723.30" x2="723.30" y1="288.80" y2="421.40" stroke="#dedede" stroke-width="1"/>
<text x="723.30" y="431.8" text-anchor="middle" font-size="8.5" fill="#666">7:21 AM</text>
<line x1="767.90" x2="767.90" y1="288.80" y2="421.40" stroke="#dedede" stroke-width="1"/>
<text x="767.90" y="431.8" text-anchor="middle" font-size="8.5" fill="#666">7:26 AM</text>
<path d="M375.42 392.60 L384.34 393.00 L393.26 392.00 L402.18 391.10 L411.10 391.50 L420.02 392.80 L428.94 392.80 L437.86 391.70 L446.78 391.10 L455.70 390.40 L464.62 392.00 L473.54 392.00 L482.46 393.00 L491.38 392.10 L500.30 393.00 L509.22 393.00 L518.14 393.00 L527.06 393.00 L535.98 391.10 L544.90 392.40 L553.82 392.60 L562.74 393.30 L571.66 393.30 L580.58 393.70 L589.50 393.70 L598.42 395.00 L607.34 394.60 L616.26 393.40 L625.18 392.80 L634.10 394.30 L643.02 394.30 L651.94 395.00 L660.86 396.90 L669.78 396.70 L678.70 395.00 L687.62 394.60 L696.54 396.70 L705.46 396.30 L714.38 395.60 L723.30 395.00 L732.22 395.60 L741.14 395.60 L750.06 395.90 L758.98 396.70 L767.90 396.90" fill="none" stroke="#7f90ae" stroke-width="2.2"/>
<circle cx="375.42" cy="392.60" r="2.4" fill="#98a7c0"/>
<circle cx="384.34" cy="393.00" r="2.4" fill="#98a7c0"/>
<circle cx="393.26" cy="392.00" r="2.4" fill="#98a7c0"/>
<circle cx="402.18" cy="391.10" r="2.4" fill="#98a7c0"/>
<circle cx="411.10" cy="391.50" r="2.4" fill="#98a7c0"/>
<circle cx="420.02" cy="392.80" r="2.4" fill="#98a7c0"/>
<circle cx="428.94" cy="392.80" r="2.4" fill="#98a7c0"/>
<circle cx="437.86" cy="391.70" r="2.4" fill="#98a7c0"/>
<circle cx="446.78" cy="391.10" r="2.4" fill="#98a7c0"/>
<circle cx="455.70" cy="390.40" r="2.4" fill="#98a7c0"/>
<circle cx="464.62" cy="392.00" r="2.4" fill="#98a7c0"/>
<circle cx="473.54" cy="392.00" r="2.4" fill="#98a7c0"/>
<circle cx="482.46" cy="393.00" r="2.4" fill="#98a7c0"/>
<circle cx="491.38" cy="392.10" r="2.4" fill="#98a7c0"/>
<circle cx="500.30" cy="393.00" r="2.4" fill="#98a7c0"/>
<circle cx="509.22" cy="393.00" r="2.4" fill="#98a7c0"/>
<circle cx="518.14" cy="393.00" r="2.4" fill="#98a7c0"/>
<circle cx="527.06" cy="393.00" r="2.4" fill="#98a7c0"/>
<circle cx="535.98" cy="391.10" r="2.4" fill="#98a7c0"/>
<circle cx="544.90" cy="392.40" r="2.4" fill="#98a7c0"/>
<circle cx="553.82" cy="392.60" r="2.4" fill="#98a7c0"/>
<circle cx="562.74" cy="393.30" r="2.4" fill="#98a7c0"/>
<circle cx="571.66" cy="393.30" r="2.4" fill="#98a7c0"/>
<circle cx="580.58" cy="393.70" r="2.4" fill="#98a7c0"/>
<circle cx="589.50" cy="393.70" r="2.4" fill="#98a7c0"/>
<circle cx="598.42" cy="395.00" r="2.4" fill="#98a7c0"/>
<circle cx="607.34" cy="394.60" r="2.4" fill="#98a7c0"/>
<circle cx="616.26" cy="393.40" r="2.4" fill="#98a7c0"/>
<circle cx="625.18" cy="392.80" r="2.4" fill="#98a7c0"/>
<circle cx="634.10" cy="394.30" r="2.4" fill="#98a7c0"/>
<circle cx="643.02" cy="394.30" r="2.4" fill="#98a7c0"/>
<circle cx="651.94" cy="395.00" r="2.4" fill="#98a7c0"/>
<circle cx="660.86" cy="396.90" r="2.4" fill="#98a7c0"/>
<circle cx="669.78" cy="396.70" r="2.4" fill="#98a7c0"/>
<circle cx="678.70" cy="395.00" r="2.4" fill="#98a7c0"/>
<circle cx="687.62" cy="394.60" r="2.4" fill="#98a7c0"/>
<circle cx="696.54" cy="396.70" r="2.4" fill="#98a7c0"/>
<circle cx="705.46" cy="396.30" r="2.4" fill="#98a7c0"/>
<circle cx="714.38" cy="395.60" r="2.4" fill="#98a7c0"/>
<circle cx="723.30" cy="395.00" r="2.4" fill="#98a7c0"/>
<circle cx="732.22" cy="395.60" r="2.4" fill="#98a7c0"/>
<circle cx="741.14" cy="395.60" r="2.4" fill="#98a7c0"/>
<circle cx="750.06" cy="395.90" r="2.4" fill="#98a7c0"/>
<circle cx="758.98" cy="396.70" r="2.4" fill="#98a7c0"/>
<circle cx="767.90" cy="396.90" r="2.4" fill="#98a7c0"/>
<line x1="361.5" x2="768" y1="529.90" y2="529.90" stroke="#dedede" stroke-width="1"/>
<text x="359" y="532.20" text-anchor="end" font-size="8.6" fill="#666">100</text>
<line x1="361.5" x2="768" y1="541.70" y2="541.70" stroke="#dedede" stroke-width="1"/>
<text x="359" y="544.00" text-anchor="end" font-size="8.6" fill="#666">90</text>
<line x1="366.50" x2="366.50" y1="529.90" y2="553" stroke="#dedede" stroke-width="1"/>
<line x1="411.10" x2="411.10" y1="529.90" y2="553" stroke="#dedede" stroke-width="1"/>
<line x1="455.70" x2="455.70" y1="529.90" y2="553" stroke="#dedede" stroke-width="1"/>
<line x1="500.30" x2="500.30" y1="529.90" y2="553" stroke="#dedede" stroke-width="1"/>
<line x1="544.90" x2="544.90" y1="529.90" y2="553" stroke="#dedede" stroke-width="1"/>
<line x1="589.50" x2="589.50" y1="529.90" y2="553" stroke="#dedede" stroke-width="1"/>
<line x1="634.10" x2="634.10" y1="529.90" y2="553" stroke="#dedede" stroke-width="1"/>
<line x1="678.70" x2="678.70" y1="529.90" y2="553" stroke="#dedede" stroke-width="1"/>
<line x1="723.30" x2="723.30" y1="529.90" y2="553" stroke="#dedede" stroke-width="1"/>
<line x1="767.90" x2="767.90" y1="529.90" y2="553" stroke="#dedede" stroke-width="1"/>
<line x1="366.5" x2="366.5" y1="288.8" y2="421.4" stroke="#d2d2d2"/>
<line x1="361.5" x2="768" y1="416.4" y2="416.4" stroke="#d2d2d2"/>
<line x1="366.5" x2="366.5" y1="529.9" y2="553" stroke="#d2d2d2"/>
</svg>

<!-- Memory chart -->
<div class="t" style="left:344px;top:480.8px;font-weight:700;font-size:12.5px;color:#222">Memory Usage</div>
<div class="abs" style="left:585.5px;top:514px;width:29px;height:9.5px;border:1.8px solid #d0889a;background:#fbd3dc"></div>
<div class="t" style="left:618px;top:514px;font-size:8.5px;color:#666">RAM Usage (%)</div>

<div class="abs" style="left:0;top:549px;width:768px;height:4px;background:#ececec"></div>
</body></html>
